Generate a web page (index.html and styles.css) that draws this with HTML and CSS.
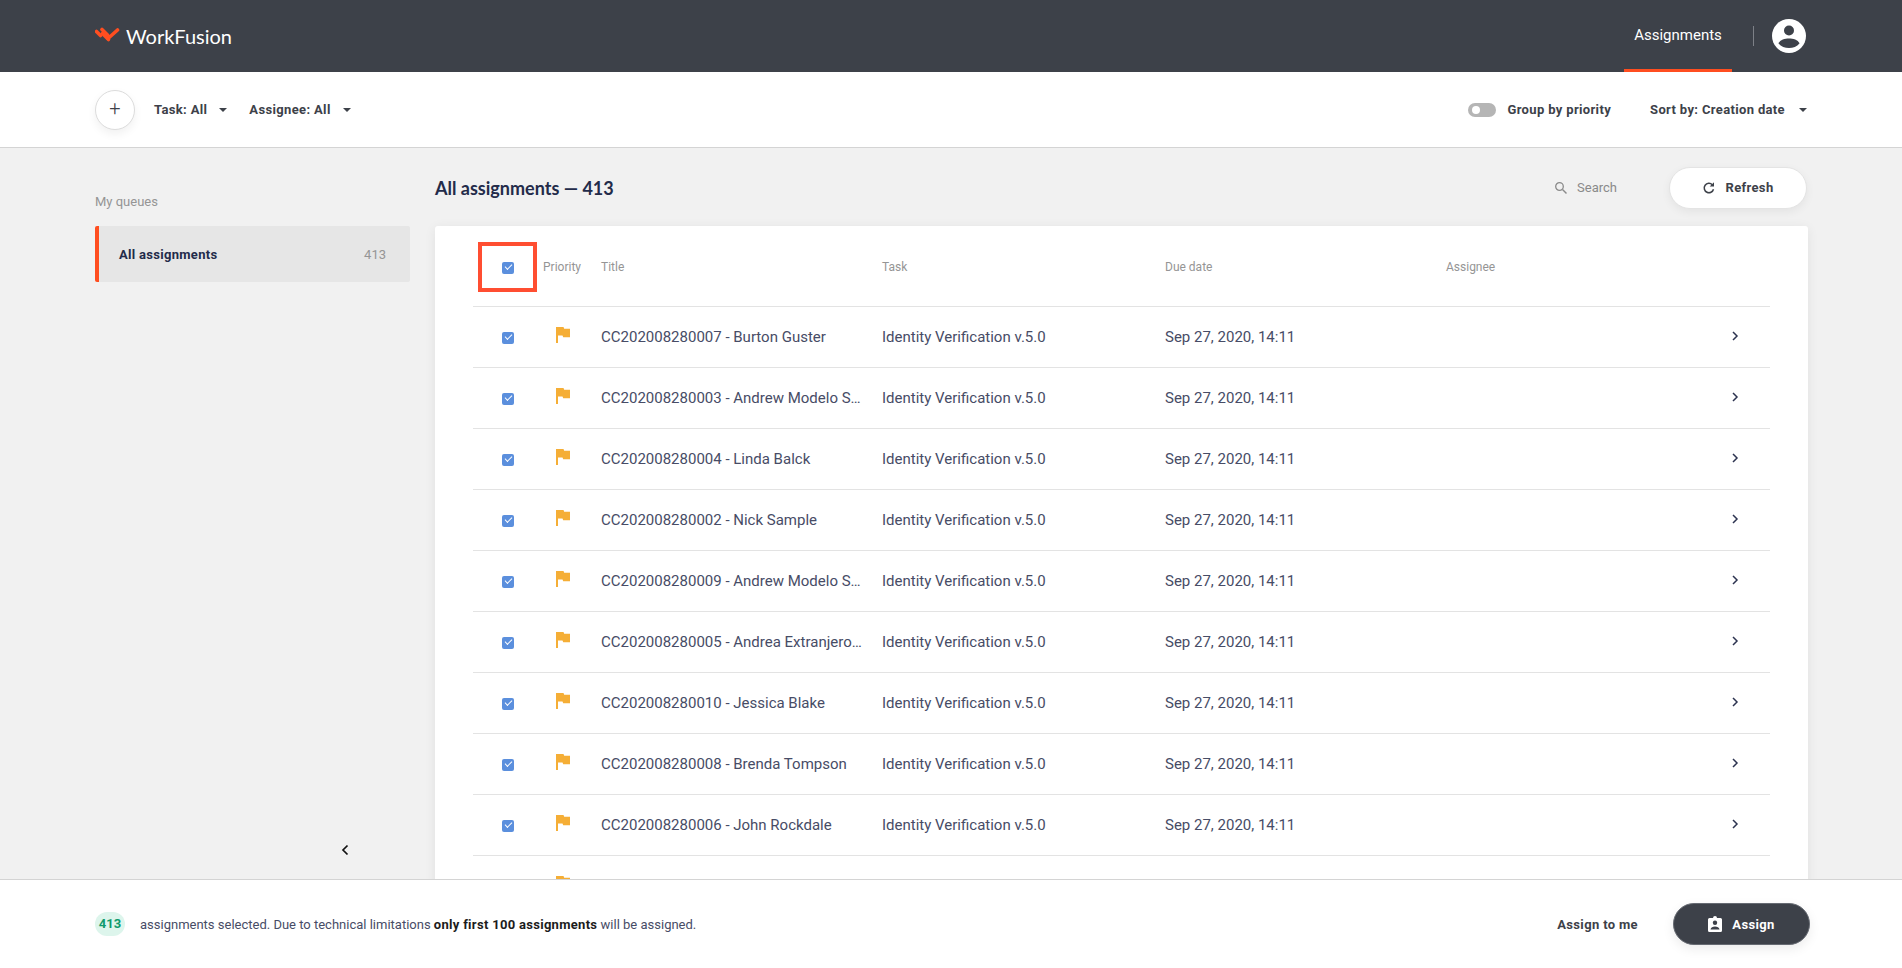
FILE: index.html
```html
<!DOCTYPE html>
<html lang="en">
<head>
    <meta charset="UTF-8">
    <title>WorkFusion - Assignments</title>
    <link rel="stylesheet" href="styles.css">
</head>
<body>

<header class="top-bar">
    <div class="logo">
        <svg class="logo-mark" width="26" height="16" viewBox="0 0 26 16">
            <path d="M1.5 4.5l4 4M7 2.5l5.5 5.5M13 11.5L22.5 3" fill="none" stroke="#ff4e20" stroke-width="3.6" stroke-linecap="round"/>
            <path d="M7.5 6.5l6 6" fill="none" stroke="#ff4e20" stroke-width="3.6" stroke-linecap="round"/>
        </svg>
        <span class="logo-text">WorkFusion</span>
    </div>
    <div class="top-right">
        <a class="top-tab">Assignments</a>
        <span class="top-divider"></span>
        <svg class="avatar" width="34" height="34" viewBox="0 0 34 34">
            <circle cx="17" cy="17" r="17" fill="#fff"/>
            <circle cx="17" cy="11.5" r="5" fill="#3d4149"/>
            <path d="M6.5 24.500C8 20.500 13 19.500 17 19.500s9 1 10.500 5C25 27.500 21 29 17 29s-8-1.500-10.500-4.500z" fill="#3d4149"/>
        </svg>
    </div>
</header>

<div class="tool-bar">
    <button class="add-button">+</button>
    <span class="filter filter-task">Task: All <i class="caret"></i></span>
    <span class="filter">Assignee: All <i class="caret"></i></span>
    <span class="spacer"></span>
    <span class="toggle"><i class="toggle-knob"></i></span>
    <span class="filter group-label">Group by priority</span>
    <span class="filter">Sort by: Creation date <i class="caret caret-sort"></i></span>
</div>

<div class="content">
    <aside class="sidebar">
        <div class="sidebar-title">My queues</div>
        <div class="queue-item">
            <span class="queue-name">All assignments</span>
            <span class="queue-count">413</span>
        </div>
        <svg class="collapse" width="10" height="14" viewBox="0 0 10 14">
            <path d="M7.500 2.500L3 7l4.500 4.500" fill="none" stroke="#111" stroke-width="1.700"/>
        </svg>
    </aside>

    <main class="main">
        <div class="main-head">
            <h1 class="main-title">All assignments — 413</h1>
            <div class="search">
                <svg width="14" height="14" viewBox="0 0 14 14">
                    <circle cx="5.500" cy="5.500" r="3.800" fill="none" stroke="#8a8a8a" stroke-width="1.300"/>
                    <path d="M8.500 8.500l4 4" stroke="#8a8a8a" stroke-width="1.500"/>
                </svg>
                <span>Search</span>
            </div>
            <button class="refresh-button">
                <svg width="14" height="14" viewBox="0 0 14 14">
                    <path d="M11.500 8.200A4.700 4.700 0 1 1 10.300 3.700" fill="none" stroke="#3d4149" stroke-width="1.500"/>
                    <path d="M12 1.200v4.300H7.700z" fill="#3d4149"/>
                </svg>
                Refresh
            </button>
        </div>

        <div class="card">
            <div class="row row-head">
                <div class="cell-check">
                    <span class="checkbox"></span>
                    <span class="highlight"></span>
                </div>
                <div>Priority</div>
                <div>Title</div>
                <div>Task</div>
                <div>Due date</div>
                <div>Assignee</div>
                <div></div>
            </div>
            <div id="rows"></div>
        </div>
    </main>
</div>

<footer class="bottom-bar">
    <span class="count-badge">413</span>
    <span class="bottom-text">assignments selected. Due to technical limitations <b>only first 100 assignments</b> will be assigned.</span>
    <span class="spacer"></span>
    <a class="assign-me">Assign to me</a>
    <button class="assign-button">
        <svg width="14" height="16" viewBox="0 0 14 16">
            <path d="M1.500 2H5a2 2 0 0 1 4 0h3.500A1.500 1.500 0 0 1 14 3.500v11a1.500 1.500 0 0 1-1.500 1.500h-11A1.500 1.500 0 0 1 0 14.500v-11A1.500 1.500 0 0 1 1.500 2z" fill="#fff"/>
            <circle cx="7" cy="6.800" r="2.200" fill="#3d4149"/>
            <path d="M2.500 13.500c0-2 2.500-3 4.500-3s4.500 1 4.500 3z" fill="#3d4149"/>
        </svg>
        Assign
    </button>
</footer>

<script>
    const titles = [
        'CC202008280007 - Burton Guster',
        'CC202008280003 - Andrew Modelo Sample',
        'CC202008280004 - Linda Balck',
        'CC202008280002 - Nick Sample',
        'CC202008280009 - Andrew Modelo Sample',
        'CC202008280005 - Andrea Extranjero Sample',
        'CC202008280010 - Jessica Blake',
        'CC202008280008 - Brenda Tompson',
        'CC202008280006 - John Rockdale',
        'CC202008280001 - Anna Sample'
    ];
    const rows = document.getElementById('rows');

    titles.forEach((title, i) => {
        const row = document.createElement('div');
        row.className = 'row';
        row.innerHTML = `
            <div class="cell-check">${i < 9 ? '<span class="checkbox"></span>' : ''}</div>
            <div class="cell-flag">
                <svg width="14" height="16" viewBox="0 0 14 16"><path d="M0 0h7.500l.7 1.800H14v8.400H7.200l-.7-1.800H2V16H0z" fill="#f5ae36"/></svg>
            </div>
            <div class="cell-title">${title}</div>
            <div>Identity Verification v.5.0</div>
            <div>Sep 27, 2020, 14:11</div>
            <div></div>
            <div class="cell-arrow">
                <svg width="10" height="12" viewBox="0 0 10 12"><path d="M3 2l4 4-4 4" fill="none" stroke="#2c3350" stroke-width="1.500"/></svg>
            </div>`;
        rows.appendChild(row);
    });
</script>

</body>
</html>
```

FILE: styles.css
```css
html, body {
    height: 100%;
}
body {
    font-family: Roboto, Arial, sans-serif;
    margin: 0;
    padding: 0;
    height: 968px;
    overflow: hidden;
    background-color: #f1f1f1;
    color: #3d4149;
}
button {
    font-family: inherit;
    cursor: pointer;
}
.spacer {
    flex: 1;
}

/* top bar */
.top-bar {
    height: 72px;
    box-sizing: border-box;
    padding: 0 95px;
    background-color: #3d4149;
    display: flex;
    justify-content: space-between;
    align-items: center;
}
.logo {
    display: flex;
    align-items: center;
    gap: 5px;
}
.logo-mark {
    display: block;
    margin-bottom: 2px;
}
.logo-text {
    font-family: Lato, sans-serif;
    font-size: 20px;
    color: #fff;
}
.top-right {
    display: flex;
    align-items: center;
    height: 100%;
    padding-right: 1px;
}
.top-tab {
    height: 100%;
    width: 108px;
    box-sizing: border-box;
    border-bottom: 3px solid #ff4e20;
    color: #fff;
    font-size: 15px;
    line-height: 71px;
    text-align: center;
}
.top-divider {
    width: 1px;
    height: 20px;
    margin: 0 18px 0 21px;
    background-color: #7d8087;
}
.avatar {
    display: block;
}

/* filters */
.tool-bar {
    height: 76px;
    box-sizing: border-box;
    padding: 0 91px 0 95px;
    background-color: #fff;
    border-bottom: 1px solid #d4d4d4;
    display: flex;
    align-items: center;
}
.add-button {
    width: 40px;
    height: 40px;
    padding: 0 0 3px;
    border: 1px solid #dcdcdc;
    border-radius: 50%;
    background-color: #fff;
    box-shadow: 0 4px 10px rgba(0, 0, 0, 0.06);
    color: #3d4149;
    font-size: 20px;
    font-weight: 300;
    margin-right: 19px;
}
.filter {
    font-size: 13px;
    font-weight: 700;
    letter-spacing: 0.35px;
    color: #3d4149;
    display: flex;
    align-items: center;
}
.filter-task {
    margin-right: 22px;
}
.caret {
    width: 0;
    height: 0;
    margin-left: 12px;
    border-left: 4px solid transparent;
    border-right: 4px solid transparent;
    border-top: 4px solid #3d4149;
}
.caret-sort {
    margin-left: 14px;
    margin-right: 4px;
}
.toggle {
    width: 28px;
    height: 14px;
    border-radius: 7px;
    background-color: #b5b5b5;
    position: relative;
    margin-right: 11px;
}
.toggle-knob {
    position: absolute;
    left: 4px;
    top: 3px;
    width: 8px;
    height: 8px;
    border-radius: 50%;
    background-color: #fff;
}
.group-label {
    margin-right: 39px;
}

/* page body */
.content {
    display: flex;
    padding: 0 95px;
    height: 745px;
    overflow: hidden;
}
.sidebar {
    width: 315px;
    flex-shrink: 0;
    margin-right: 25px;
    position: relative;
}
.sidebar-title {
    margin-top: 46px;
    height: 32px;
    font-size: 13px;
    color: #959595;
}
.queue-item {
    height: 56px;
    box-sizing: border-box;
    padding: 0 24px 0 20px;
    background-color: #e6e6e6;
    border-left: 4px solid #ff4e20;
    border-radius: 2px;
    display: flex;
    justify-content: space-between;
    align-items: center;
}
.queue-name {
    font-size: 13px;
    font-weight: 700;
    letter-spacing: 0.3px;
    color: #232b4a;
}
.queue-count {
    font-size: 13px;
    color: #959595;
}
.collapse {
    position: absolute;
    left: 245px;
    top: 695px;
}
.main {
    flex: 1;
}
.main-head {
    height: 78px;
    display: flex;
    align-items: center;
    box-sizing: border-box;
    padding-top: 1px;
}
.main-title {
    flex: 1;
    margin: 0;
    font-family: Lato, sans-serif;
    font-size: 18px;
    font-weight: 700;
    color: #232b4a;
}
.search {
    display: flex;
    align-items: center;
    gap: 9px;
    margin-right: 52px;
    font-size: 13px;
    color: #8a8a8a;
}
.refresh-button {
    width: 138px;
    height: 42px;
    border: 1px solid #e4e4e4;
    border-radius: 21px;
    background-color: #fff;
    box-shadow: 0 3px 10px rgba(0, 0, 0, 0.06);
    color: #3d4149;
    font-size: 13px;
    font-weight: 700;
    letter-spacing: 0.35px;
    display: flex;
    align-items: center;
    justify-content: center;
    gap: 9px;
    margin-right: 1px;
}

/* table */
.card {
    width: 1373px;
    box-sizing: border-box;
    padding: 0 38px;
    height: 700px;
    background-color: #fff;
    border-radius: 3px 3px 0 0;
    box-shadow: 0 2px 12px rgba(0, 0, 0, 0.07);
}
.row {
    height: 61px;
    box-sizing: border-box;
    border-bottom: 1px solid #e3e3e3;
    display: grid;
    grid-template-columns: 70px 58px 281px 283px 281px 1fr 40px;
    align-items: center;
    font-size: 15px;
    color: #474c66;
}
.row-head {
    height: 81px;
    padding-top: 2px;
    font-size: 12px;
    color: #959595;
}
.cell-check {
    position: relative;
    display: flex;
    justify-content: center;
    padding-right: 1px;
    padding-top: 1px;
}
.checkbox {
    width: 12px;
    height: 12px;
    border-radius: 2px;
    background-color: #5b8fdd;
    position: relative;
}
.checkbox::after {
    content: "";
    position: absolute;
    left: 3px;
    top: 2px;
    width: 6px;
    height: 3px;
    border-left: 1.2px solid #fff;
    border-bottom: 1.2px solid #fff;
    transform: rotate(-45deg);
}
.highlight {
    position: absolute;
    left: 5px;
    top: -19px;
    width: 59px;
    height: 50px;
    box-sizing: border-box;
    border: 4px solid #ff4e31;
}
.cell-flag {
    padding-left: 13px;
    padding-bottom: 4px;
}
.cell-flag svg,
.cell-arrow svg {
    display: block;
}
.cell-title {
    padding-right: 18px;
    white-space: nowrap;
    overflow: hidden;
    text-overflow: ellipsis;
}
.cell-arrow {
    padding-bottom: 3px;
}

/* bottom bar */
.bottom-bar {
    position: fixed;
    left: 0;
    right: 0;
    bottom: 0;
    height: 89px;
    box-sizing: border-box;
    padding: 0 91px 0 95px;
    background-color: #fff;
    border-top: 1px solid #d4d4d4;
    display: flex;
    align-items: center;
}
.count-badge {
    width: 30px;
    height: 24px;
    border-radius: 12px;
    background-color: #ddf5ec;
    color: #0f9a6d;
    font-size: 13px;
    font-weight: 700;
    line-height: 24px;
    text-align: center;
    margin-right: 15px;
}
.bottom-text {
    font-size: 13px;
    color: #474c66;
}
.bottom-text b {
    color: #1c1c1c;
    letter-spacing: 0.3px;
}
.assign-me {
    font-size: 13px;
    font-weight: 700;
    letter-spacing: 0.35px;
    color: #3d4149;
    margin-right: 35px;
}
.assign-button {
    width: 137px;
    height: 42px;
    border: 1px solid #666a72;
    border-radius: 21px;
    background-color: #3d4149;
    box-shadow: 0 4px 12px rgba(0, 0, 0, 0.08);
    color: #fff;
    font-size: 13px;
    font-weight: 700;
    letter-spacing: 0.35px;
    display: flex;
    align-items: center;
    justify-content: center;
    gap: 10px;
    margin-right: 1px;
}
```
